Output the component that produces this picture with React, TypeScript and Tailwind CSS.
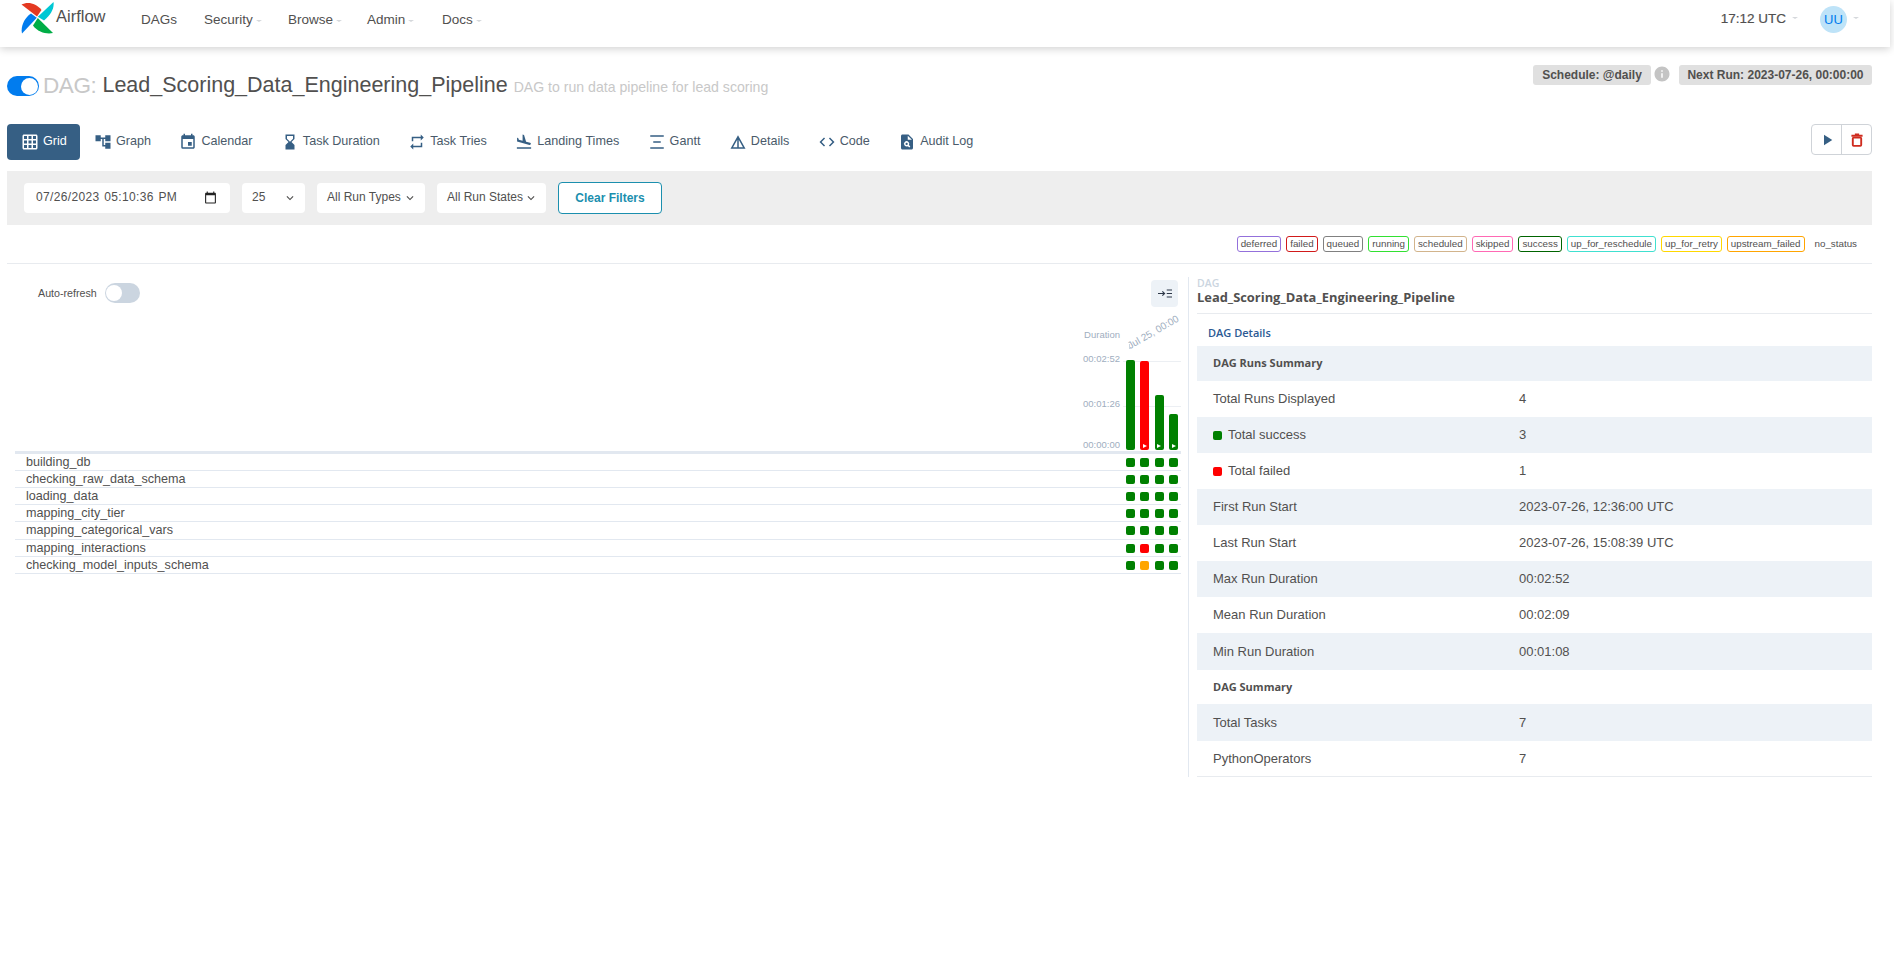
import React from "react";
import {
  MdGridOn, MdAccountTree, MdEvent, MdHourglassBottom, MdRepeat, MdFlightLand,
  MdDetails, MdCode, MdPlagiarism, MdPlayArrow, MdInfo, MdKeyboardArrowDown, MdCalendarToday,
} from "react-icons/md";

const Gantt = ({ className }: { className?: string }) => (
  <svg viewBox="0 0 24 24" className={className} fill="currentColor">
    <rect x="3" y="3" width="18" height="2" />
    <rect x="7" y="11" width="10" height="2" />
    <rect x="3" y="19" width="18" height="2" />
  </svg>
);

const Trash = () => (
  <svg viewBox="0 0 14 16" className="w-[12px] h-[14px] text-[#cf2c1f]">
    <path fill="currentColor" d="M4.5 0.5h5v1.5h4V4.2H0.5V2h4z" />
    <rect x="2.1" y="5.2" width="9.8" height="9.6" rx="1" fill="none" stroke="currentColor" strokeWidth="2.2" />
  </svg>
);

const Logo = () => (
  <svg viewBox="0 0 33 33" className="w-[33px] h-[33px] shrink-0">
    <path fill="#e43921" d="M16 15.5 L0.5 3.5 C6 0.5 15 1.5 20.5 9 Z" />
    <path fill="#00c7d4" d="M16.8 15.8 L32.5 1 C33.5 7 30 14 23 19.5 Z" />
    <path fill="#00ad46" d="M16.8 17 L32 32 C26 33.5 17 31.5 12 24.5 Z" />
    <path fill="#017cee" d="M15.8 16.8 L1 32.5 C-0.5 26 3 17 10 12.5 Z" />
  </svg>
);

const Caret = () => <span className="inline-block ml-[3px] w-0 h-0 border-x-[3px] border-x-transparent border-t-[2px] border-t-[#d5d8dc] translate-y-[-2px]" />;

const navItems = [
  { label: "DAGs", caret: false, w: "w-[63px]" },
  { label: "Security", caret: true, w: "w-[84px]" },
  { label: "Browse", caret: true, w: "w-[79px]" },
  { label: "Admin", caret: true, w: "w-[75px]" },
  { label: "Docs", caret: true, w: "w-[60px]" },
];

const tabs = [
  { label: "Grid", Icon: MdGridOn },
  { label: "Graph", Icon: MdAccountTree },
  { label: "Calendar", Icon: MdEvent },
  { label: "Task Duration", Icon: MdHourglassBottom },
  { label: "Task Tries", Icon: MdRepeat },
  { label: "Landing Times", Icon: MdFlightLand },
  { label: "Gantt", Icon: Gantt },
  { label: "Details", Icon: MdDetails },
  { label: "Code", Icon: MdCode },
  { label: "Audit Log", Icon: MdPlagiarism },
];

const legend = [
  ["deferred", "border-[#9370db]"],
  ["failed", "border-[#d11a1a]"],
  ["queued", "border-[#808080]"],
  ["running", "border-[#32e032]"],
  ["scheduled", "border-[#d2b48c]"],
  ["skipped", "border-[#ff69b4]"],
  ["success", "border-[#006400]"],
  ["up_for_reschedule", "border-[#40e0d0]"],
  ["up_for_retry", "border-[#ffd700]"],
  ["upstream_failed", "border-[#ffa500]"],
];

const G = "bg-[#008000]";
const R = "bg-[#ff0000]";
const O = "bg-[#ffa500]";
const taskRows: [string, string[], string][] = [
  ["building_db", [G, G, G, G], "h-[17px]"],
  ["checking_raw_data_schema", [G, G, G, G], "h-[17px]"],
  ["loading_data", [G, G, G, G], "h-[17px]"],
  ["mapping_city_tier", [G, G, G, G], "h-[17px]"],
  ["mapping_categorical_vars", [G, G, G, G], "h-[18px]"],
  ["mapping_interactions", [G, R, G, G], "h-[17px]"],
  ["checking_model_inputs_schema", [G, O, G, G], "h-[17px]"],
];

const bars = [
  { color: G, h: "h-[90px]", play: false },
  { color: R, h: "h-[89px]", play: true },
  { color: G, h: "h-[55px]", play: true },
  { color: G, h: "h-[36px]", play: true },
];

const PillSelect = ({ label, w }: { label: string; w: string }) => (
  <div className={`${w} h-[30px] bg-white rounded-[4px] flex items-center justify-between pl-[10px] pr-[8px] text-[12px] text-[#51504f]`}>
    <span className="-translate-y-[1px]">{label}</span>
    <MdKeyboardArrowDown className="w-[14px] h-[14px]" />
  </div>
);

const Row = ({ label, value, dot, shade, h }: { label: string; value?: string; dot?: string; shade: boolean; h: string }) => (
  <div className={`${h} ${shade ? "bg-[#edf2f7]" : ""} flex items-center pl-[16px] text-[13px] text-[#51504f]`}>
    <div className="w-[306px] flex items-center">
      {dot && <span className={`w-[9px] h-[9px] rounded-[2px] mr-[6px] ${dot}`} />}
      {label}
    </div>
    <div>{value}</div>
  </div>
);

const SectionRow = ({ label, shade, h }: { label: string; shade: boolean; h: string }) => (
  <div className={`${h} ${shade ? "bg-[#edf2f7]" : ""} flex items-center pl-[16px] text-[11px] font-bold text-[#51504f] [font-family:'Open_Sans',sans-serif]`}>
    {label}
  </div>
);

export default function App() {
  return (
    <div className="w-full min-h-[980px] bg-white pr-[4px] [font-family:'Liberation_Sans',Arial,sans-serif] text-[#51504f]">
      <nav className="h-[47px] flex items-start justify-between bg-white shadow-[0_2px_8px_rgba(0,0,0,0.18)] pl-[21px] pr-[31px]">
        <div className="flex items-start">
          <div className="flex items-start pt-[1px] w-[120px]">
            <Logo />
            <span className="ml-[2px] mt-[5px] text-[16.5px] leading-[20px] text-[#51504f]">Airflow</span>
          </div>
          <div className="flex items-center text-[13.5px] text-[#51504f] pt-[10px]">
            {navItems.map((n) => (
              <div key={n.label} className={n.w}>
                {n.label}
                {n.caret && <Caret />}
              </div>
            ))}
          </div>
        </div>
        <div className="flex items-center pt-[6px]">
          <span className="text-[13.5px] font-medium [-webkit-text-stroke:0.2px_#51504f]">17:12 UTC</span>
          <span className="ml-[3px] flex"><Caret /></span>
          <div className="ml-[22px] w-[27px] h-[27px] rounded-full bg-[#bee3f8] flex items-center justify-center text-[13px] text-[#017cee]">UU</div>
          <span className="ml-[3px] flex"><Caret /></span>
        </div>
      </nav>

      <div className="pl-[7px] pr-[18px]">
        <div className="flex justify-between h-[77px]">
          <div className="flex items-center h-[78px] self-start">
            <div className="relative w-[32px] h-[20px] rounded-full bg-[#017cee] shrink-0">
              <div className="absolute right-[1px] top-[1.5px] w-[17px] h-[17px] rounded-full bg-white" />
            </div>
            <span className="pl-[4px] text-[22.5px] leading-none tracking-[-0.4px] text-[#c8c8c8]">DAG:</span>
            <span className="ml-[6px] text-[21.5px] leading-none text-[#51504f]">Lead_Scoring_Data_Engineering_Pipeline</span>
            <span className="ml-[6px] text-[14.1px] leading-none text-[#c8c8c8] translate-y-[1px]">DAG to run data pipeline for lead scoring</span>
          </div>
          <div className="flex items-start pt-[18px] text-[12px] font-bold">
            <div className="w-[118px] h-[20px] rounded-[3px] bg-[#e0e0e0] flex items-center justify-center">Schedule: @daily</div>
            <MdInfo className="w-[18px] h-[18px] text-[#c4c4c4] ml-[2px] mr-[8px]" />
            <div className="w-[193px] h-[20px] rounded-[3px] bg-[#e0e0e0] flex items-center justify-center">Next Run: 2023-07-26, 00:00:00</div>
          </div>
        </div>

        <div className="flex justify-between items-start h-[47px]">
          <div className="flex">
            {tabs.map(({ label, Icon }, i) => (
              <div
                key={label}
                className={`h-[36px] flex items-center gap-[4px] text-[12.6px] rounded-[4px] ${i === 0 ? "bg-[#365f84] text-white pl-[14px] pr-[13px]" : "text-[#4a5a6a] px-[14.2px]"}`}
              >
                <Icon className={`w-[18px] h-[18px] ${i === 0 ? "text-white" : "text-[#365f84]"}`} />
                <span className="-translate-y-[1px]">{label}</span>
              </div>
            ))}
          </div>
          <div className="flex h-[31px] w-[61px] border border-[#cfd3d8] rounded-[4px]">
            <div className="flex-1 flex items-center justify-center border-r border-[#cfd3d8]">
              <MdPlayArrow className="w-[18px] h-[18px] text-[#365f84]" />
            </div>
            <div className="flex-1 flex items-center justify-center">
              <Trash />
            </div>
          </div>
        </div>

        <div className="h-[54px] bg-[#eeeeee] flex items-center pl-[17px] gap-[12px]">
          <div className="w-[206px] h-[30px] bg-white rounded-[4px] pl-[12px] pr-[13px] flex items-center justify-between text-[12px] tracking-[0.35px] [word-spacing:1px] text-[#51504f]">
            <span className="-translate-y-[1px]">07/26/2023 05:10:36 PM</span>
            <MdCalendarToday className="w-[13px] h-[13px] text-[#222] -translate-y-[1px]" />
          </div>
          <PillSelect label="25" w="w-[63px]" />
          <PillSelect label="All Run Types" w="w-[108px]" />
          <PillSelect label="All Run States" w="w-[109px]" />
          <div className="w-[104px] h-[32px] bg-white border border-[#1b8fae] rounded-[4px] flex items-center justify-center text-[12px] font-bold text-[#1b8fae]">Clear Filters</div>
        </div>

        <div className="h-[39px] border-b border-[#e8ebef] flex items-center justify-end pr-[15px] gap-[5px] text-[9.8px] text-[#51504f]">
          {legend.map(([l, b]) => (
            <span key={l} className={`h-[16px] px-[3px] flex items-center border ${b} rounded-[3px]`}>{l}</span>
          ))}
          <span className="ml-[5px]">no_status</span>
        </div>

        <div className="flex items-start">
          <div className="w-[1174px] pt-[16px] pl-[8px]">
            <div className="flex justify-between items-center h-[27px] pr-[3px]">
              <div className="flex items-center pl-[23px] pb-[1px] text-[10.7px]">
                <span>Auto-refresh</span>
                <div className="relative ml-[8px] w-[35px] h-[20px] rounded-full bg-[#cbd5e0]">
                  <div className="absolute left-[1px] top-[2px] w-[16px] h-[16px] rounded-full bg-white" />
                </div>
              </div>
              <div className="w-[27px] h-[27px] rounded-[4px] bg-[#edf2f7] flex items-center justify-center text-[#2d3748]">
                <svg viewBox="0 0 16 10" className="w-[14px] h-[9px]" fill="none" stroke="currentColor" strokeWidth="1.3">
                  <path d="M0 5h7M5 2.5L7.5 5 5 7.5" />
                  <path d="M10 1h6M10 5h6M10 9h6" />
                </svg>
              </div>
            </div>

            <div className="relative h-[147px] border-b-[3px] border-[#e2e8f0]">
              <div className="absolute right-[0px] top-[54px] w-[58px] border-t border-[#eceff3]" />
              <div className="absolute right-[0px] top-[99px] w-[58px] border-t border-[#eceff3]" />
              <div className="absolute right-[61px] top-[23px] text-[9.5px] leading-none text-[#a0aec0] whitespace-nowrap">Duration</div>
              <div className="absolute right-[61px] top-[47px] text-[9.5px] leading-none text-[#a0aec0] whitespace-nowrap">00:02:52</div>
              <div className="absolute right-[61px] top-[92px] text-[9.5px] leading-none text-[#a0aec0] whitespace-nowrap">00:01:26</div>
              <div className="absolute right-[61px] top-[133px] text-[9.5px] leading-none text-[#a0aec0] whitespace-nowrap">00:00:00</div>
              <div className="absolute left-[1116px] top-[34px] text-[10px] leading-none text-[#a0aec0] whitespace-nowrap origin-bottom-left rotate-[-30deg]">Jul 25, 00:00</div>
              <div className="absolute left-[1114px] top-[37px] h-[5px] border-l border-[#cbd5e0]" />
              <div className="relative h-full flex items-end justify-end gap-[5.3px] pr-[3px] pb-[1px]">
                {bars.map((b, i) => (
                  <div key={i} className={`relative w-[9px] ${b.h} ${b.color} rounded-[2px] flex items-end justify-center pb-[2px]`}>
                    {b.play && <span className="w-0 h-0 border-y-[2.5px] border-y-transparent border-l-[4px] border-l-white" />}
                  </div>
                ))}
              </div>
            </div>

            {taskRows.map(([name, cells, h]) => (
              <div key={name} className={`${h} border-b border-[#e2e8f0] flex items-center justify-between pl-[11px] pr-[3px]`}>
                <span className="text-[12.6px] leading-none text-[#51504f]">{name}</span>
                <div className="flex gap-[5.3px]">
                  {cells.map((c, i) => (
                    <span key={i} className={`w-[9px] h-[9px] rounded-[2px] ${c}`} />
                  ))}
                </div>
              </div>
            ))}
          </div>

          <div className="flex-1 ml-[7px] mt-[13px] border-l border-[#e2e8f0] pl-[8px] h-[500px]">
            <div className="h-[37px] border-b border-[#e8ebef] [font-family:'Open_Sans',sans-serif]">
              <div className="text-[10.5px] leading-[12px] font-semibold text-[#cbd5e0]">DAG</div>
              <div className="text-[12.9px] leading-[16px] font-bold text-[#51504f]">Lead_Scoring_Data_Engineering_Pipeline</div>
            </div>
            <div className="h-[32px] flex items-center pl-[11px] pt-[6px] text-[11px] font-semibold text-[#2c5a94] [font-family:'Open_Sans',sans-serif]">DAG Details</div>
            <SectionRow label="DAG Runs Summary" shade h="h-[35px]" />
            <Row label="Total Runs Displayed" value="4" shade={false} h="h-[36px]" />
            <Row label="Total success" value="3" dot={G} shade h="h-[36px]" />
            <Row label="Total failed" value="1" dot={R} shade={false} h="h-[36px]" />
            <Row label="First Run Start" value="2023-07-26, 12:36:00 UTC" shade h="h-[36px]" />
            <Row label="Last Run Start" value="2023-07-26, 15:08:39 UTC" shade={false} h="h-[36px]" />
            <Row label="Max Run Duration" value="00:02:52" shade h="h-[36px]" />
            <Row label="Mean Run Duration" value="00:02:09" shade={false} h="h-[36px]" />
            <Row label="Min Run Duration" value="00:01:08" shade h="h-[37px]" />
            <SectionRow label="DAG Summary" shade={false} h="h-[34px]" />
            <Row label="Total Tasks" value="7" shade h="h-[37px]" />
            <div className="border-b border-[#e8ebef]">
              <Row label="PythonOperators" value="7" shade={false} h="h-[35px]" />
            </div>
          </div>
        </div>
      </div>
    </div>
  );
}
